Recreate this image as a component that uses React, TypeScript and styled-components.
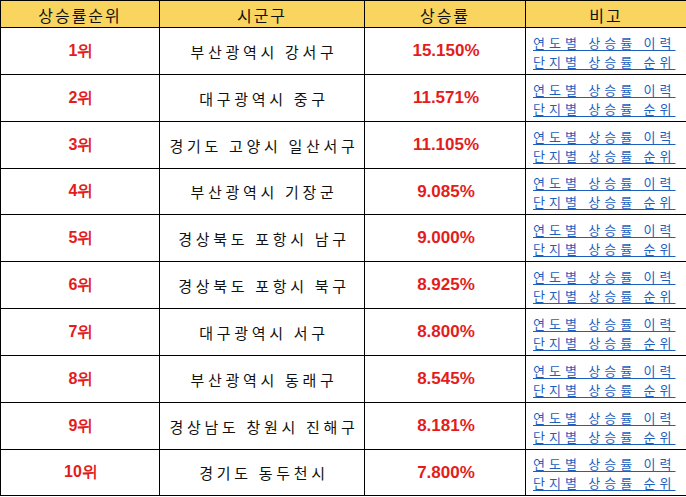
import React from "react";
import styled, { createGlobalStyle } from "styled-components";

const Global = createGlobalStyle`
  html, body { margin: 0; padding: 0; background: #ffffff; }
  body { font-family: "Noto Sans CJK KR", "Noto Sans", sans-serif; }
`;

const Table = styled.div`
  display: grid;
  grid-template-columns: 160px 205px 161px 160px;
  width: 686px;
  overflow: hidden;
`;

const HeadCell = styled.div<{ $first?: boolean; $last?: boolean }>`
  box-sizing: border-box;
  height: 28px;
  background: #f9d55f;
  border-top: 1px solid #000;
  border-bottom: 1px solid #000;
  border-left: ${(p) => (p.$first ? "1px solid #000" : "none")};
  border-right: ${(p) => (p.$last ? "none" : "1px solid #000")};
  display: flex;
  align-items: center;
  justify-content: center;
  font-family: "Noto Sans CJK KR", sans-serif;
  font-size: 16px;
  letter-spacing: 2px;
  color: #111;
  padding-top: 1px;
`;

const Cell = styled.div<{ $h: number; $first?: boolean; $last?: boolean }>`
  box-sizing: border-box;
  height: ${(p) => p.$h}px;
  border-bottom: 1px solid #000;
  border-left: ${(p) => (p.$first ? "1px solid #000" : "none")};
  border-right: ${(p) => (p.$last ? "none" : "1px solid #000")};
  display: flex;
  align-items: center;
  justify-content: center;
  background: #fff;
`;

const Rank = styled.span`
  font-family: "Liberation Sans", Arial, sans-serif;
  font-weight: bold;
  font-size: 16px;
  color: #e41c1c;
  padding-left: 2px;
`;

const Region = styled.span`
  font-family: "Noto Sans CJK KR", sans-serif;
  font-size: 15px;
  letter-spacing: 3.7px;
  color: #111;
  padding-left: 4px;
`;

const Rate = styled.span`
  font-family: "Liberation Sans", Arial, sans-serif;
  font-weight: bold;
  font-size: 17px;
  color: #e41c1c;
  padding-left: 2px;
`;

const LinkBox = styled.div`
  display: flex;
  flex-direction: column;
  align-items: flex-start;
  width: 100%;
  padding-left: 7px;
  padding-top: 1px;
  box-sizing: border-box;
`;

const Link = styled.a`
  display: block;
  font-family: "Noto Sans CJK KR", sans-serif;
  font-size: 13px;
  line-height: 19px;
  letter-spacing: 4.1px;
  color: #1d5fbf;
  text-decoration: underline;
  text-underline-offset: 2px;
  white-space: nowrap;
`;

const rows = [
  ["1위", "부산광역시 강서구", "15.150%"],
  ["2위", "대구광역시 중구", "11.571%"],
  ["3위", "경기도 고양시 일산서구", "11.105%"],
  ["4위", "부산광역시 기장군", "9.085%"],
  ["5위", "경상북도 포항시 남구", "9.000%"],
  ["6위", "경상북도 포항시 북구", "8.925%"],
  ["7위", "대구광역시 서구", "8.800%"],
  ["8위", "부산광역시 동래구", "8.545%"],
  ["9위", "경상남도 창원시 진해구", "8.181%"],
  ["10위", "경기도 동두천시", "7.800%"],
];

const heights = [47, 47, 47, 46, 47, 47, 47, 47, 47, 46];

export default function App() {
  return (
    <>
      <Global />
      <Table>
        <HeadCell $first>상승률순위</HeadCell>
        <HeadCell>시군구</HeadCell>
        <HeadCell>상승률</HeadCell>
        <HeadCell $last>비고</HeadCell>
        {rows.map((r, i) => (
          <React.Fragment key={i}>
            <Cell $h={heights[i]} $first>
              <Rank>{r[0]}</Rank>
            </Cell>
            <Cell $h={heights[i]}>
              <Region>{r[1]}</Region>
            </Cell>
            <Cell $h={heights[i]}>
              <Rate>{r[2]}</Rate>
            </Cell>
            <Cell $h={heights[i]} $last>
              <LinkBox>
                <Link href="#">연도별 상승률 이력</Link>
                <Link href="#">단지별 상승률 순위</Link>
              </LinkBox>
            </Cell>
          </React.Fragment>
        ))}
      </Table>
    </>
  );
}
